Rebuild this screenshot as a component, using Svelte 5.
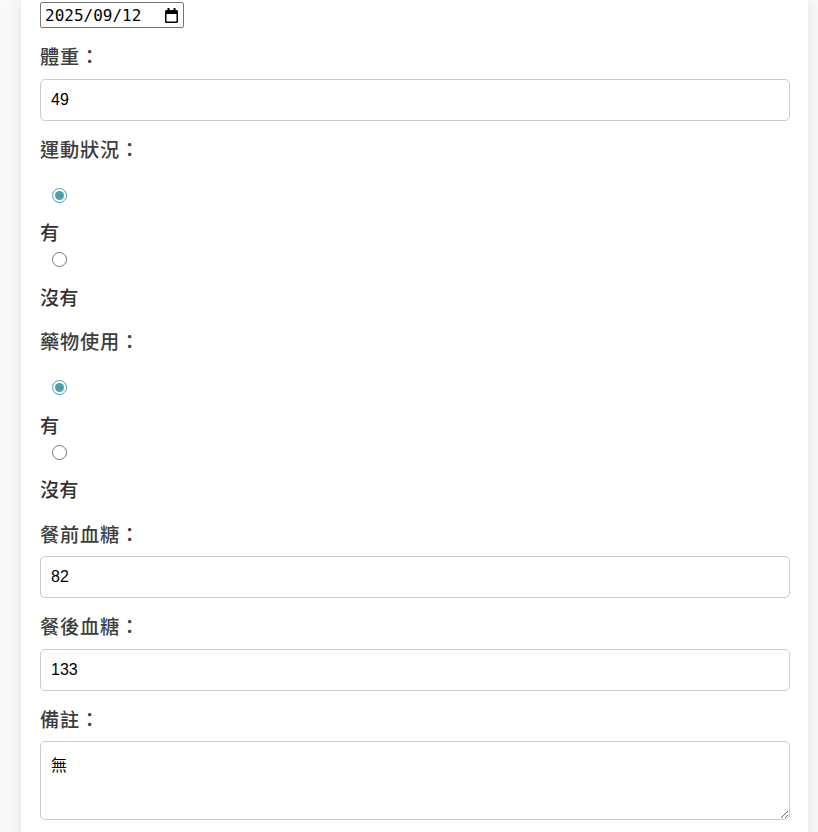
<script>
	let form = $state({
		date: '2025/09/12',
		weight: '49',
		exercise: 'yes',
		medication: 'yes',
		before: '82',
		after: '133',
		note: '無'
	});
</script>

<div class="page">
	<form class="card">
		<div class="date">
			<input type="text" bind:value={form.date} />
			<svg width="13" height="15" viewBox="0 0 13 15" aria-hidden="true">
				<path d="M2.500 0h2v2h4V0h2v2h1A1.500 1.500 0 0 1 13 3.500v10a1.500 1.500 0 0 1-1.500 1.500h-10A1.500 1.500 0 0 1 0 13.500v-10A1.500 1.500 0 0 1 1.500 2h1zM1.500 6v7.500h10V6z" fill="#000" />
			</svg>
		</div>

		<label class="label" for="weight">體重：</label>
		<input class="field" id="weight" type="text" bind:value={form.weight} />

		<span class="label">運動狀況：</span>
		<div class="radios">
			<input type="radio" name="exercise" value="yes" bind:group={form.exercise} />
			<span class="option">有</span>
			<input type="radio" name="exercise" value="no" bind:group={form.exercise} />
			<span class="option">沒有</span>
		</div>

		<span class="label">藥物使用：</span>
		<div class="radios">
			<input type="radio" name="medication" value="yes" bind:group={form.medication} />
			<span class="option">有</span>
			<input type="radio" name="medication" value="no" bind:group={form.medication} />
			<span class="option">沒有</span>
		</div>

		<label class="label" for="before">餐前血糖：</label>
		<input class="field" id="before" type="text" bind:value={form.before} />

		<label class="label" for="after">餐後血糖：</label>
		<input class="field" id="after" type="text" bind:value={form.after} />

		<label class="label" for="note">備註：</label>
		<textarea class="field note" id="note" bind:value={form.note}></textarea>
	</form>
</div>

<style>
	:global(body) {
		background: #f9f9f9;
		overflow: hidden;
	}

	.page {
		height: 832px;
		overflow: hidden;
		padding: 0 10px 0 21px;
	}

	.card {
		display: flex;
		flex-direction: column;
		align-items: flex-start;
		background: #fff;
		padding: 2px 18px 40px 19px;
		box-shadow: 0 0 15px rgba(0, 0, 0, 0.1);
		font-family: "Liberation Sans", "Noto Sans CJK TC", sans-serif;
		color: #333;
	}

	.date {
		display: flex;
		align-items: center;
		width: 144px;
		height: 26px;
		box-sizing: border-box;
		margin-bottom: 14px;
		padding: 0 3px 0 4px;
		border: 1px solid #767676;
		border-radius: 2px;
		background: #fff;
	}

	.date input {
		flex: 1;
		min-width: 0;
		padding: 0;
		border: none;
		outline: none;
		background: transparent;
		font-family: "DejaVu Sans Mono", monospace;
		font-size: 16px;
		color: #000;
	}

	.date svg {
		margin-right: 2px;
		flex: none;
	}

	.label {
		display: block;
		font-size: 19.2px;
		font-weight: 500;
		padding-top: 2px;
		line-height: 27px;
		letter-spacing: 0.8px;
		margin-bottom: 7.5px;
		color: #3d3d3d;
	}

	.field {
		display: block;
		width: 100%;
		height: 42px;
		box-sizing: border-box;
		margin: 0 0 14px;
		padding: 10px;
		border: 1px solid #ccc;
		border-radius: 5px;
		font-family: "Liberation Sans", "Noto Sans CJK TC", sans-serif;
		font-size: 16px;
		color: #000;
	}

	.note {
		height: 79px;
		resize: vertical;
	}

	.radios {
		display: flex;
		flex-direction: column;
		align-items: flex-start;
		padding-top: 11.6px;
		margin-bottom: 15.5px;
	}

	.radios input {
		width: 15px;
		height: 15px;
		margin: 5px 12px 15.5px;
		accent-color: #4a9fb0;
	}

	.option {
		font-size: 19.2px;
		font-weight: 500;
		padding-top: 2px;
		line-height: 27px;
	}
</style>
